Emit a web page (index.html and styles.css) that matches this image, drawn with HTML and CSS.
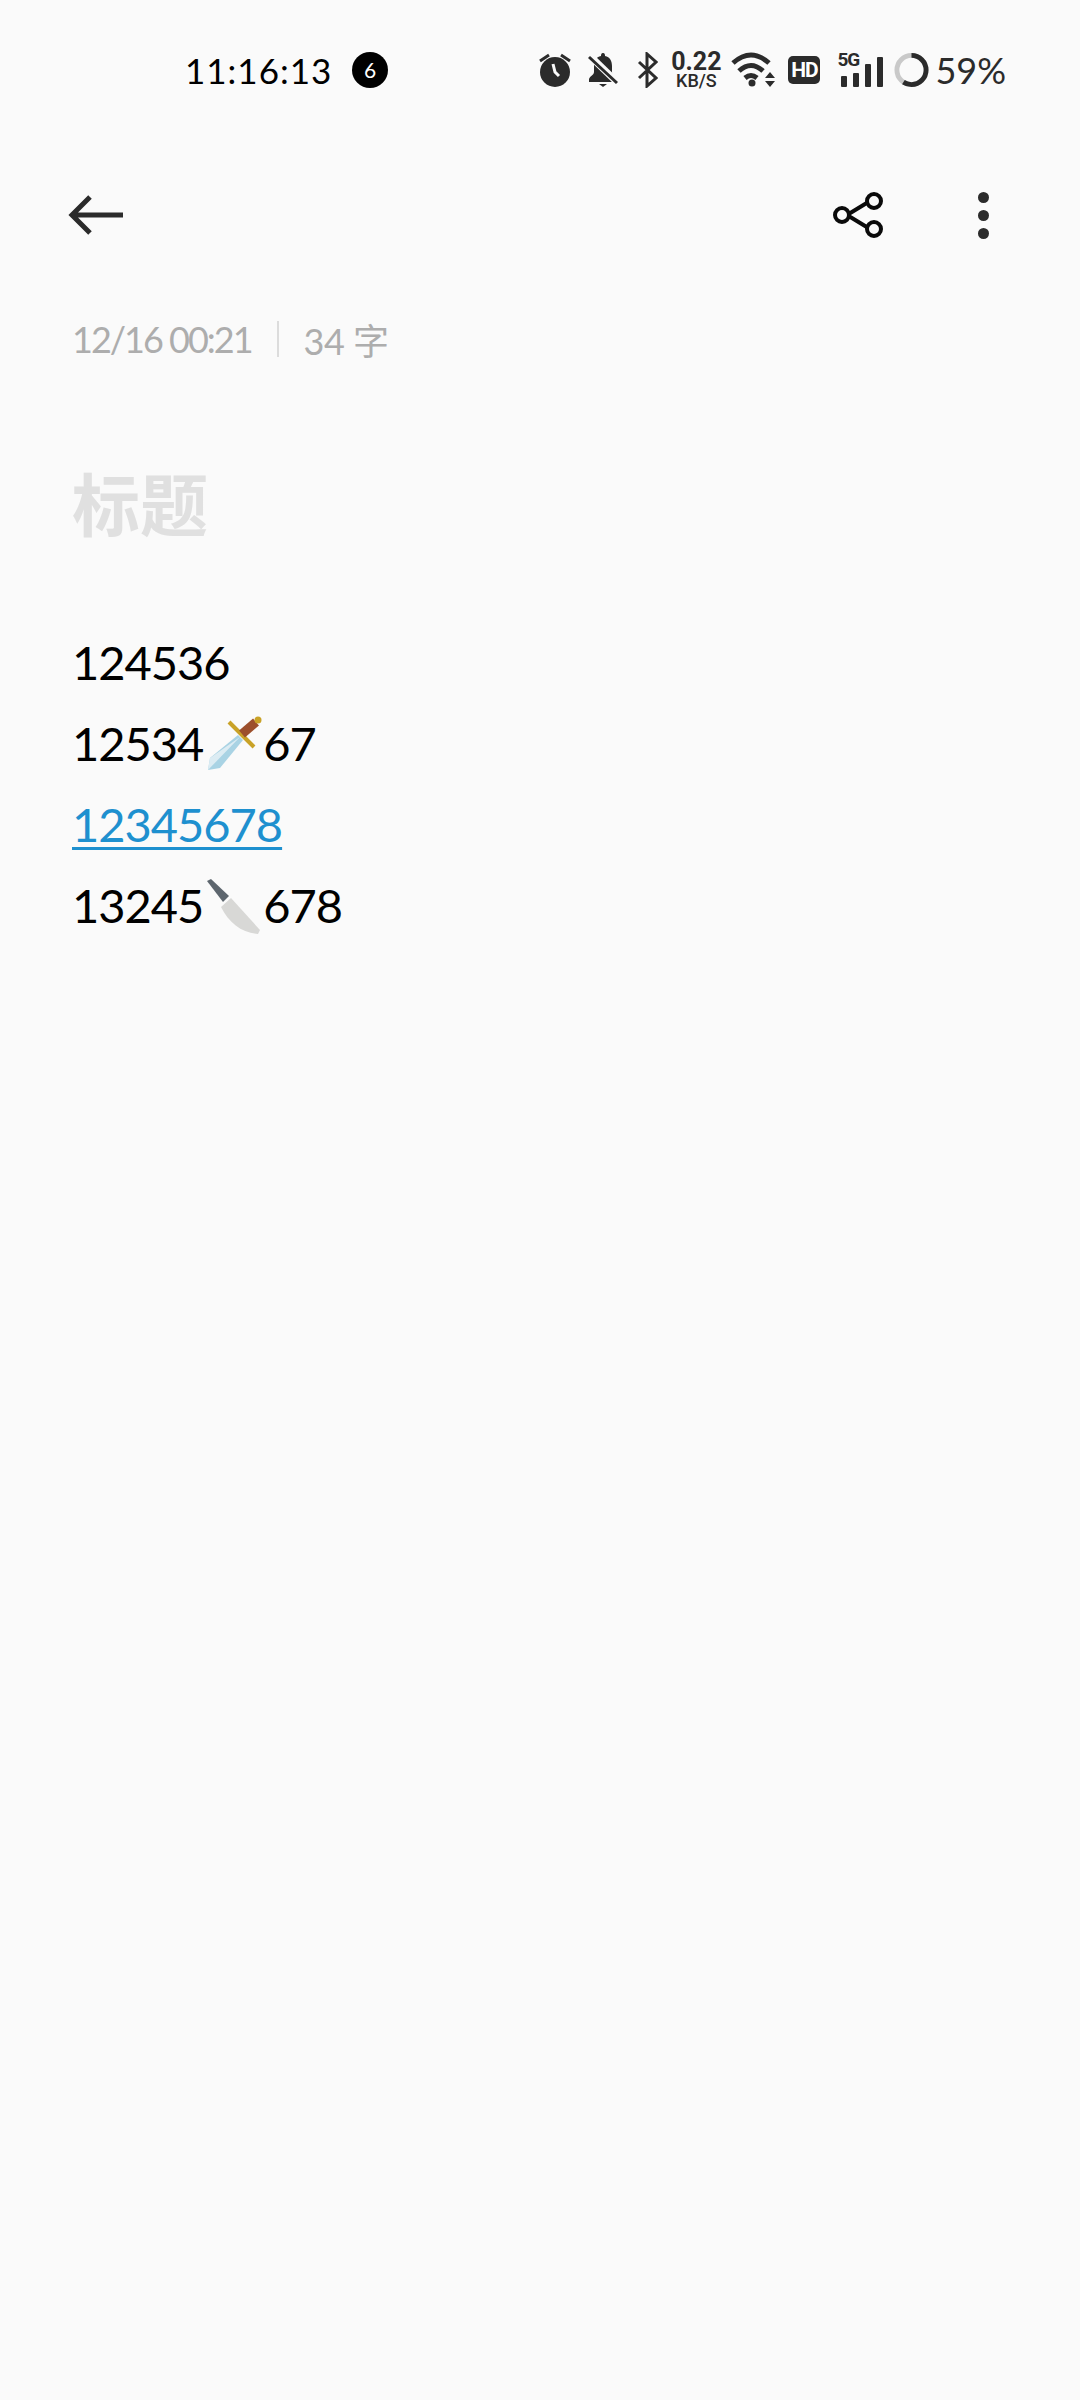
FILE: index.html
```html
<!DOCTYPE html>
<html lang="zh-CN">

<head>
    <meta charset="UTF-8">
    <meta name="viewport" content="width=device-width, initial-scale=1.0">
    <title>便签</title>
    <link rel="stylesheet" href="styles.css">
</head>

<body>
    <!-- 状态栏 -->
    <div class="status-bar">
        <span class="clock">11:16:13</span>
        <span class="badge">6</span>
        <div class="status-icons">
            <svg class="ic-alarm" width="32" height="36" viewBox="0 0 32 36">
                <circle cx="16" cy="20" r="15" fill="#2b2b2b" />
                <path d="M1 9L10 3M31 9L22 3" stroke="#2b2b2b" stroke-width="3" fill="none" />
                <path d="M14 12L16 20L20 24" stroke="#fafafa" stroke-width="3" fill="none" />
            </svg>
            <svg class="ic-bell" width="30" height="36" viewBox="0 0 30 36">
                <path d="M15 1C13 1 13 3 13 4C8 5 6 9 6 14V20C6 23 2 24 1 27V30H29V27C27 24 24 23 24 20V14C24 9 22 5 17 4C17 3 17 1 15 1Z" fill="#2b2b2b" />
                <path d="M11 32H19L15 35Z" fill="#2b2b2b" />
                <path d="M1 3L31 32" stroke="#fafafa" stroke-width="7" fill="none" />
                <path d="M1 5L29 31" stroke="#2b2b2b" stroke-width="3" fill="none" />
            </svg>
            <svg class="ic-bt" width="21" height="36" viewBox="0 0 21 36">
                <path d="M2 10L19 26L10 34V2L19 10L2 26" stroke="#2b2b2b" stroke-width="3" fill="none" />
            </svg>
            <div class="speed">
                <span class="speed-num">0.22</span>
                <span class="speed-unit">KB/S</span>
            </div>
            <svg class="ic-wifi" width="44" height="36" viewBox="0 0 44 36">
                <path d="M2 11Q20 -5 38 11M8 19Q20 8 32 19M14 26Q20 21 26 26" stroke="#2b2b2b" stroke-width="5" fill="none" />
                <circle cx="21" cy="31" r="3.5" fill="#2b2b2b" />
                <path d="M39 20L34 26H44ZM34 29H44L39 35Z" fill="#2b2b2b" />
            </svg>
            <span class="hd">HD</span>
            <div class="signal">
                <span class="signal-5g">5G</span>
                <span class="bar bar-1"></span>
                <span class="bar bar-2"></span>
                <span class="bar bar-3"></span>
                <span class="bar bar-4"></span>
            </div>
            <svg class="ic-battery" width="35" height="36" viewBox="0 0 36 36">
                <circle cx="18" cy="18" r="15" fill="none" stroke="#c9c9c9" stroke-width="5" />
                <circle cx="18" cy="18" r="15" fill="none" stroke="#2b2b2b" stroke-width="5" stroke-dasharray="55.6 100" transform="rotate(-90 18 18)" />
            </svg>
            <span class="percent">59%</span>
        </div>
    </div>

    <!-- 工具栏 -->
    <div class="toolbar">
        <svg width="56" height="42" viewBox="0 0 56 42">
            <path d="M55 21H4M22 3L4 21L22 39" stroke="#2b2b2b" stroke-width="5" fill="none" />
        </svg>
        <div class="toolbar-right">
            <svg class="ic-share" width="52" height="48" viewBox="0 0 52 48">
                <path d="M14 24L37 10M14 24L37 38" stroke="#0a0a0a" stroke-width="4" fill="none" />
                <circle cx="9" cy="24" r="7" fill="#fafafa" stroke="#0a0a0a" stroke-width="4" />
                <circle cx="41" cy="10" r="7" fill="#fafafa" stroke="#0a0a0a" stroke-width="4" />
                <circle cx="41" cy="38" r="7" fill="#fafafa" stroke="#0a0a0a" stroke-width="4" />
            </svg>
            <div class="more">
                <span class="dot"></span>
                <span class="dot"></span>
                <span class="dot"></span>
            </div>
        </div>
    </div>

    <!-- 便签内容 -->
    <div class="note">
        <div class="meta">
            <span class="meta-date">12/16 00:21</span>
            <span class="meta-line"></span>
            <span class="meta-count">34 字</span>
        </div>
        <h1 class="title">标题</h1>
        <div class="content">
            <p>124536</p>
            <p>12534<svg class="emoji" width="58" height="58" viewBox="0 0 58 58">
                    <path d="M4 54L6 42L34 19L39 24L16 52Z" fill="#a9d3e4" />
                    <path d="M4 54L6 42L36 21Z" fill="#dcecf3" />
                    <path d="M25 6L50 31" stroke="#c9a227" stroke-width="4" fill="none" />
                    <path d="M38 18L52 6" stroke="#9c4f2c" stroke-width="9" fill="none" />
                    <circle cx="54" cy="4" r="3.5" fill="#c9a227" />
                </svg>67</p>
            <p><a class="link">12345678</a></p>
            <p>13245<svg class="emoji" width="58" height="58" viewBox="0 0 58 58">
                    <path d="M3 3L7 1L25 18L19 24Z" fill="#5d666e" />
                    <path d="M17 29L27 20L56 52L54 56C38 55 25 45 17 29Z" fill="#d8d8d6" />
                </svg>678</p>
        </div>
    </div>
</body>

</html>
```

FILE: styles.css
```css
/* 全局 */
body {
    margin: 0;
    height: 2400px;
    background-color: #fafafa;
    font-family: "Lato", "Noto Sans CJK SC", sans-serif;
    color: #000;
    overflow: hidden;
}

svg {
    display: block;
    flex-shrink: 0;
}

/* 状态栏 */
.status-bar {
    display: flex;
    align-items: center;
    height: 140px;
    padding-left: 185px;
    padding-right: 74px;
    box-sizing: border-box;
}

.clock {
    font-size: 35px;
    letter-spacing: 1px;
    width: 167px;
}

.badge {
    width: 36px;
    height: 36px;
    border-radius: 50%;
    background-color: #000;
    color: #fff;
    font-size: 21px;
    line-height: 36px;
    text-align: center;
}

.status-icons {
    display: flex;
    align-items: center;
    margin-left: auto;
    color: #2b2b2b;
}

.ic-bell {
    margin-left: 17px;
}

.ic-bt {
    margin-left: 19px;
}

.speed {
    display: flex;
    flex-direction: column;
    align-items: center;
    width: 48px;
    margin-left: 14px;
    font-weight: 700;
    font-family: "Roboto", sans-serif;
}

.speed-num {
    font-size: 25px;
    line-height: 22px;
}

.speed-unit {
    font-size: 18px;
    font-weight: 500;
    line-height: 16px;
}

.ic-wifi {
    margin-left: 11px;
}

.hd {
    width: 32px;
    height: 28px;
    margin-left: 13px;
    border-radius: 5px;
    background-color: #2b2b2b;
    color: #fff;
    font-family: "Roboto", sans-serif;
    font-size: 21px;
    font-weight: 700;
    letter-spacing: -1px;
    line-height: 28px;
    text-align: center;
}

.signal {
    position: relative;
    display: flex;
    align-items: flex-end;
    gap: 6px;
    width: 46px;
    height: 34px;
    margin-left: 17px;
    padding-left: 4px;
    box-sizing: border-box;
}

.signal-5g {
    position: absolute;
    left: 0;
    top: -3px;
    font-family: "Roboto", sans-serif;
    font-size: 19px;
    font-weight: 700;
    letter-spacing: -1px;
    line-height: 20px;
}

.bar {
    width: 6px;
    border-radius: 1px;
    background-color: #2b2b2b;
}

.bar-1 {
    height: 11px;
}

.bar-2 {
    height: 14px;
}

.bar-3 {
    height: 23px;
}

.bar-4 {
    height: 30px;
}

.ic-battery {
    margin-left: 11px;
}

.percent {
    margin-left: 6px;
    font-size: 36px;
    font-weight: 400;
    color: #2b2b2b;
}

/* 工具栏 */
.toolbar {
    display: flex;
    align-items: center;
    justify-content: space-between;
    height: 150px;
    padding-left: 68px;
    padding-right: 91px;
}

.toolbar-right {
    display: flex;
    align-items: center;
    gap: 93px;
}

.more {
    display: flex;
    flex-direction: column;
    gap: 7px;
}

.dot {
    width: 11px;
    height: 11px;
    border-radius: 50%;
    background-color: #2b2b2b;
}

/* 便签内容 */
.note {
    padding-left: 72px;
}

.meta {
    display: flex;
    align-items: center;
    height: 40px;
    margin-top: 29px;
    font-size: 36px;
    color: #adadad;
}

.meta-date {
    letter-spacing: -2px;
}

.meta-count {
    letter-spacing: -0.5px;
}

.meta-line {
    width: 2px;
    height: 36px;
    margin: 0 25px;
    background-color: #dcdcdc;
}

.title {
    margin: 101px 0 0 0;
    font-size: 68px;
    font-weight: 700;
    line-height: 90px;
    color: #e0e0e0;
}

.content {
    margin-top: 71px;
    font-size: 47px;
    letter-spacing: -1px;
}

.content p {
    display: flex;
    align-items: center;
    height: 81px;
    margin: 0;
}

.link {
    color: #1e90cf;
    text-decoration: underline;
    text-decoration-thickness: 3px;
    text-underline-offset: 5px;
}

.emoji {
    margin: 4px 1px 0;
}
```
